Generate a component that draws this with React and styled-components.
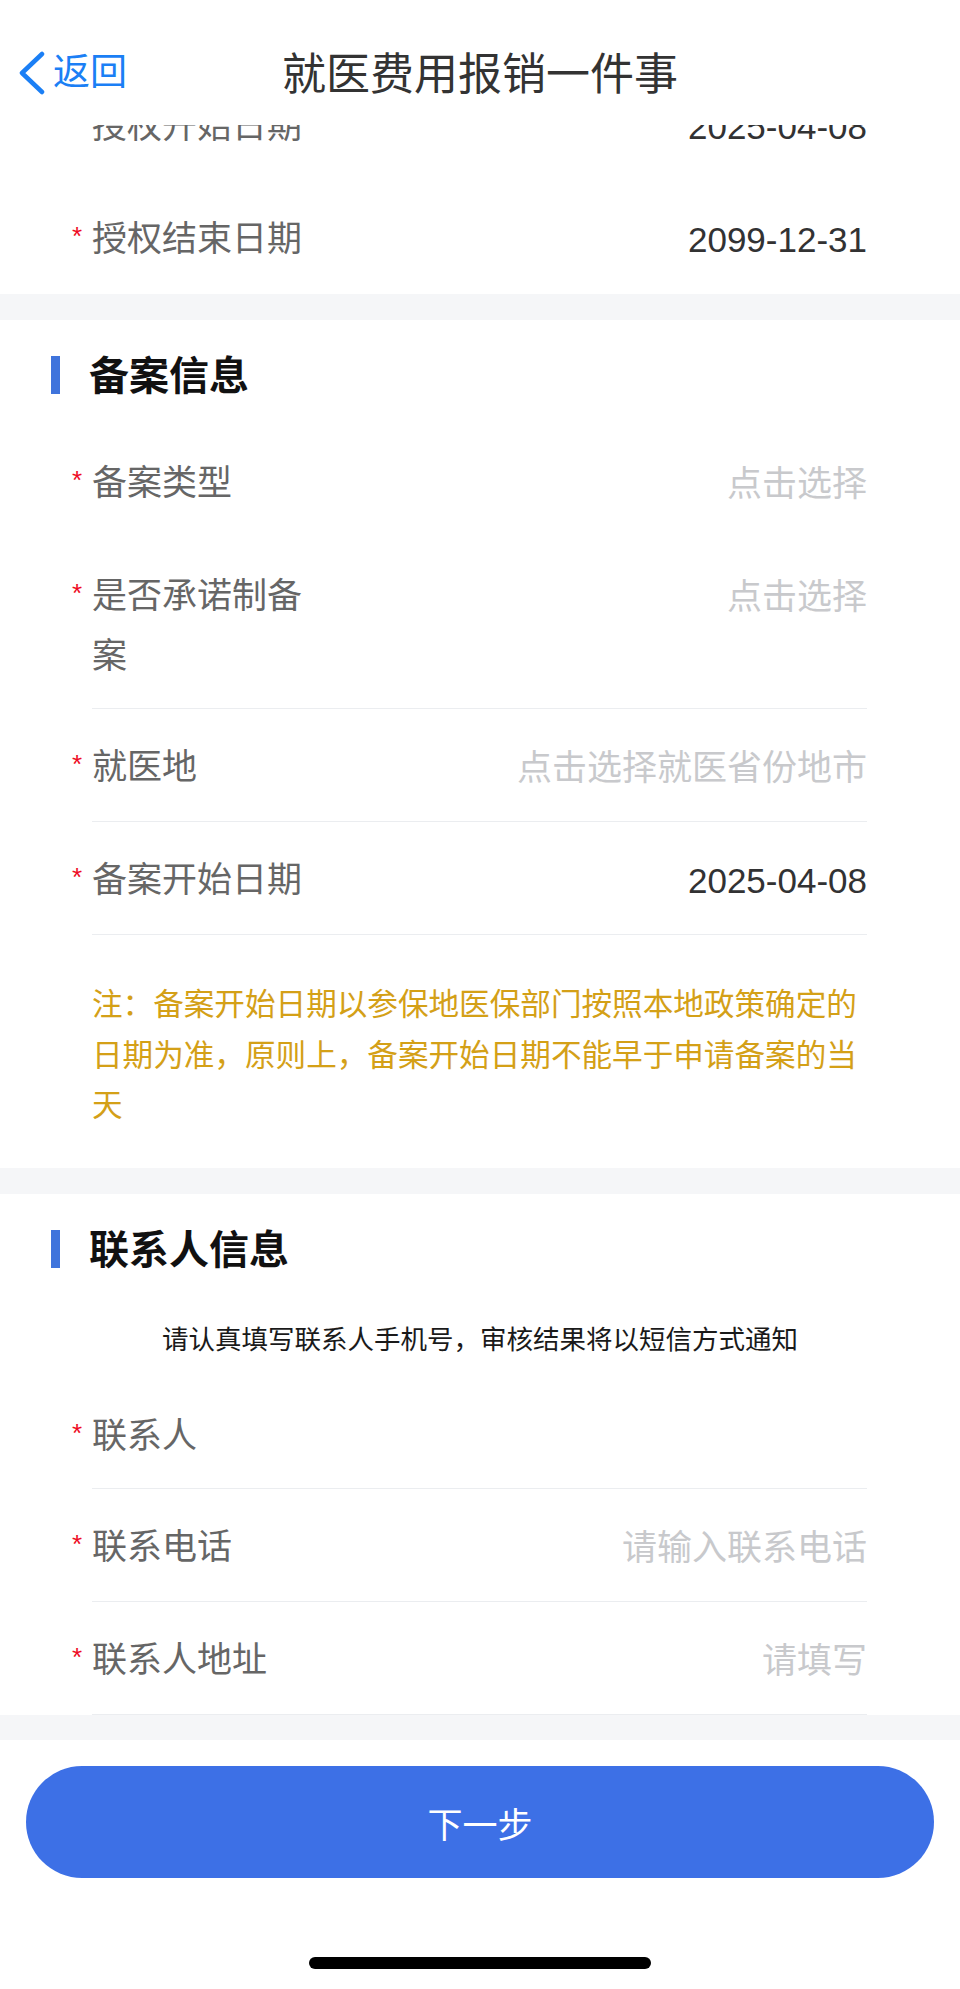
import React from 'react';
import styled, {createGlobalStyle} from 'styled-components';

const GlobalStyle = createGlobalStyle`
    html, body {
        margin: 0;
        padding: 0;
        background-color: #fff;
    }
    body {
        font-family: "Liberation Sans", "Noto Sans CJK SC", sans-serif;
        -webkit-font-smoothing: antialiased;
    }
    * {
        box-sizing: border-box;
    }
`;

const Page = styled.div`
    display: flex;
    flex-direction: column;
    width: 960px;
    height: 1989px;
    overflow: hidden;
    background-color: #f5f6f8;
`;

const Header = styled.header`
    flex: none;
    height: 125px;
    padding-top: 29px;
    background-color: #fff;
`;

const NavBar = styled.div`
    display: grid;
    grid-template-columns: 1fr auto 1fr;
    align-items: center;
    height: 88px;
`;

const Back = styled.a`
    display: flex;
    align-items: center;
    gap: 7px;
    justify-self: start;
    padding-left: 18px;

    font-size: 37px;
    line-height: 44px;
    color: #1b7ff5;
    text-decoration: none;
`;

const Title = styled.h1`
    margin: 0;
    padding-top: 3px;
    font-size: 44px;
    font-weight: 400;
    line-height: 60px;
    color: #333;
`;

const Scroll = styled.main`
    flex: 1;
    min-height: 0;
    overflow: hidden;
`;

// page is scrolled a little: first rows sit under the nav bar
const Content = styled.div`
    display: flex;
    flex-direction: column;
    gap: 26px;
    margin-top: -57px;
`;

const Section = styled.section`
    background-color: #fff;
`;

const SectionHead = styled.div`
    display: flex;
    align-items: center;
    gap: 29px;
    height: 105px;
    padding: 35px 0 30px 51px;
`;

const Bar = styled.i`
    width: 9px;
    height: 38px;
    background-color: #3f74dc;
`;

const SectionTitle = styled.h2`
    margin: 0;
    padding-top: 2px;
    font-size: 40px;
    font-weight: bold;
    line-height: 40px;
    color: #111;
`;

const Fields = styled.div`
    padding: 0 93px 0 92px;
`;

const Row = styled.div`
    display: flex;
    align-items: flex-start;
    padding: 28px 0 22px;
    border-bottom: 1px solid ${p => (p.$divided ? '#ebedf0' : 'transparent')};
`;

const Label = styled.label`
    position: relative;
    flex: none;
    width: 217px;

    font-size: 35px;
    line-height: 60px;
    color: #666;

    &::before {
        content: ${p => (p.$required ? "'*'" : "''")};
        position: absolute;
        top: 0;
        left: -20px;
        font-size: 26px;
        line-height: 54px;
        color: #ee0a24;
    }
`;

const Value = styled.div`
    flex: 1;
    min-width: 0;
    text-align: right;

    font-size: 35px;
    line-height: 62px;
    color: ${p => (p.$placeholder ? '#c8c9cc' : '#323233')};
`;

const Notice = styled.p`
    margin: 0;
    padding: 44px 93px 37px 92px;
    font-size: 30.6px;
    line-height: 50.5px;
    color: #d4a017;
`;

const Hint = styled.p`
    margin: 0;
    padding: 21px 0 18px;
    text-align: center;
    font-size: 26.5px;
    line-height: 40px;
    color: #1a1a1a;
`;

const Footer = styled.footer`
    flex: none;
    display: flex;
    flex-direction: column;
    align-items: center;
    height: 249px;
    padding: 26px 26px 20px;
    background-color: #fff;
`;

const NextButton = styled.button`
    width: 100%;
    height: 112px;
    padding: 0;

    font-family: inherit;
    font-size: 35px;
    color: #fff;

    border: none;
    border-radius: 56px;
    background-color: #3d70e6;
`;

const HomeBar = styled.i`
    width: 342px;
    height: 12px;
    margin-top: 79px;
    border-radius: 6px;
    background-color: #000;
`;

const Chevron = () => (
    <svg width='28' height='44' viewBox='0 0 28 44' fill='none'>
        <polyline points='24,3 4,22 24,41' stroke='currentColor' strokeWidth='4.5' strokeLinecap='round' strokeLinejoin='round' />
    </svg>
);

const Field = ({label, value, placeholder, divided, required = true}) => (
    <Row $divided={divided}>
        <Label $required={required}>{label}</Label>
        <Value $placeholder={!value}>{value || placeholder}</Value>
    </Row>
);

const authFields = [
    {label: '授权开始日期', value: '2025-04-08'},
    {label: '授权结束日期', value: '2099-12-31'},
];

const recordFields = [
    {label: '备案类型', placeholder: '点击选择'},
    {label: '是否承诺制备案', placeholder: '点击选择', divided: true},
    {label: '就医地', placeholder: '点击选择就医省份地市', divided: true},
    {label: '备案开始日期', value: '2025-04-08', divided: true},
];

const contactFields = [
    {label: '联系人', divided: true},
    {label: '联系电话', placeholder: '请输入联系电话', divided: true},
    {label: '联系人地址', placeholder: '请填写', divided: true},
];

const App = () => (
    <Page>
        <GlobalStyle />
        <Header>
            <NavBar>
                <Back>
                    <Chevron />
                    返回
                </Back>
                <Title>就医费用报销一件事</Title>
            </NavBar>
        </Header>
        <Scroll>
            <Content>
                <Section>
                    <Fields>
                        {authFields.map(f => <Field key={f.label} {...f} />)}
                    </Fields>
                </Section>
                <Section>
                    <SectionHead>
                        <Bar />
                        <SectionTitle>备案信息</SectionTitle>
                    </SectionHead>
                    <Fields>
                        {recordFields.map(f => <Field key={f.label} {...f} />)}
                    </Fields>
                    <Notice>注：备案开始日期以参保地医保部门按照本地政策确定的日期为准，原则上，备案开始日期不能早于申请备案的当天</Notice>
                </Section>
                <Section>
                    <SectionHead>
                        <Bar />
                        <SectionTitle>联系人信息</SectionTitle>
                    </SectionHead>
                    <Hint>请认真填写联系人手机号，审核结果将以短信方式通知</Hint>
                    <Fields>
                        {contactFields.map(f => <Field key={f.label} {...f} />)}
                    </Fields>
                </Section>
            </Content>
        </Scroll>
        <Footer>
            <NextButton>下一步</NextButton>
            <HomeBar />
        </Footer>
    </Page>
);

export default App;
